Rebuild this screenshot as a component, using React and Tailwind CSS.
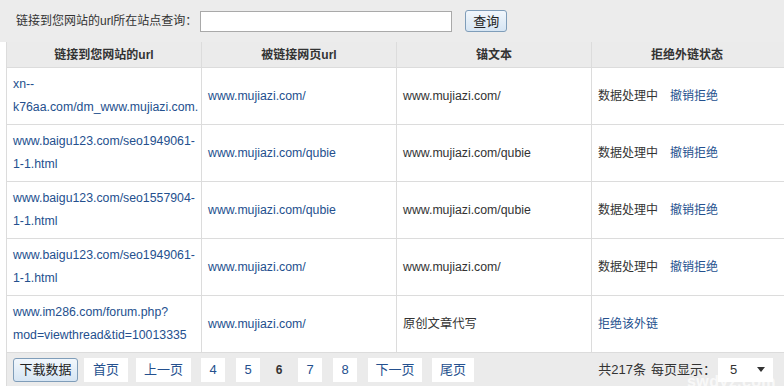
const rows = [
  { src: ['xn--', 'k76aa.com/dm_www.mujiazi.com.'], target: 'www.mujiazi.com/', anchor: 'www.mujiazi.com/', done: false },
  { src: ['www.baigu123.com/seo1949061-', '1-1.html'], target: 'www.mujiazi.com/qubie', anchor: 'www.mujiazi.com/qubie', done: false },
  { src: ['www.baigu123.com/seo1557904-', '1-1.html'], target: 'www.mujiazi.com/qubie', anchor: 'www.mujiazi.com/qubie', done: false },
  { src: ['www.baigu123.com/seo1949061-', '1-1.html'], target: 'www.mujiazi.com/', anchor: 'www.mujiazi.com/', done: false },
  { src: ['www.im286.com/forum.php?', 'mod=viewthread&tid=10013335'], target: 'www.mujiazi.com/', anchor: '原创文章代写', done: true },
];

const pages = [
  { label: '首页', cls: 'ml-[6px] w-[44px]' },
  { label: '上一页', cls: 'ml-[8px] w-[55px]' },
  { label: '4', cls: 'ml-[10px] w-[24px]' },
  { label: '5', cls: 'ml-[11px] w-[24px]' },
  { label: '6', cls: 'ml-[5px] w-[28px]', current: true },
  { label: '7', cls: 'ml-[5px] w-[24px]' },
  { label: '8', cls: 'ml-[11px] w-[24px]' },
  { label: '下一页', cls: 'ml-[11px] w-[54px]' },
  { label: '尾页', cls: 'ml-[10px] w-[42px]' },
];

export default function App() {
  return (
    <div className="w-[784px] h-[391px] overflow-hidden bg-white text-[12px] text-[#333] font-['Liberation_Sans','Noto_Sans_CJK_SC',sans-serif] relative">
      {/* search bar */}
      <div className="h-[42px] bg-[#ececec] flex items-center pl-[16px]">
        <span className="text-[12px] text-[#333]">链接到您网站的url所在站点查询：</span>
        <input className="ml-[3px] w-[252px] h-[21px] bg-white border border-[#a9a9a9] outline-none" />
        <button className="ml-[13px] w-[42px] h-[22px] rounded-[3px] border border-[#7f9db9] bg-gradient-to-b from-[#f2f7fc] to-[#d6e5f3] text-[13px] text-[#222] leading-none">
          查询
        </button>
      </div>

      <div className="ml-[6px] border-l border-[#dcdcdc]">
        {/* header */}
        <div className="grid grid-cols-[195px_195px_195px_1fr] h-[26px] bg-[#ebebeb] border-b border-[#dcdcdc] font-bold text-[#333]">
          <div className="flex items-center justify-center border-r border-[#dcdcdc]">链接到您网站的url</div>
          <div className="flex items-center justify-center border-r border-[#dcdcdc]">被链接网页url</div>
          <div className="flex items-center justify-center border-r border-[#dcdcdc]">锚文本</div>
          <div className="flex items-center justify-center pr-[2px]">拒绝外链状态</div>
        </div>

        {rows.map((r, i) => (
          <div key={i} className="grid grid-cols-[195px_195px_195px_1fr] h-[57px] border-b border-[#dcdcdc]">
            <div className="flex flex-col justify-center px-[6px] border-r border-[#dcdcdc] text-[#24508e] text-[12.3px] leading-[23px] whitespace-nowrap overflow-hidden">
              {r.src.map((s, j) => (
                <span key={j}>{s}</span>
              ))}
            </div>
            <div className="flex items-center px-[6px] border-r border-[#dcdcdc] text-[#24508e] text-[12.3px]">{r.target}</div>
            <div className="flex items-center px-[6px] border-r border-[#dcdcdc] text-[#333] text-[12.3px]">{r.anchor}</div>
            <div className="flex items-center px-[6px]">
              {r.done ? (
                <span className="text-[#24508e]">拒绝该外链</span>
              ) : (
                <>
                  <span className="text-[#333]">数据处理中</span>
                  <span className="ml-[12px] text-[#24508e]">撤销拒绝</span>
                </>
              )}
            </div>
          </div>
        ))}

        {/* footer */}
        <div className="h-[33px] bg-[#ebebeb] flex items-center pl-[6px] pr-[11px]">
          <button className="w-[65px] h-[24px] rounded-[3px] border border-[#7f9db9] bg-gradient-to-b from-[#f2f7fc] to-[#d6e5f3] text-[13px] text-[#222] leading-none">
            下载数据
          </button>
          {pages.map((p, i) =>
            p.current ? (
              <span key={i} className={`${p.cls} h-[24px] flex items-center justify-center font-bold text-[#333]`}>{p.label}</span>
            ) : (
              <span key={i} className={`${p.cls} h-[24px] bg-white flex items-center justify-center text-[#24508e] text-[13px]`}>{p.label}</span>
            )
          )}
          <div className="ml-auto flex items-center text-[13px] text-[#333]">
            <span>共217条</span>
            <span className="ml-[5px]">每页显示：</span>
            <div className="ml-[2px] w-[55px] h-[24px] bg-white flex items-center justify-between pl-[12px] pr-[8px]">
              <span>5</span>
              <svg width="8" height="5" viewBox="0 0 8 5"><path d="M0 0h8L4 5z" fill="#333" /></svg>
            </div>
          </div>
        </div>
      </div>
      {/* watermark */}
      <span className="absolute right-[8px] bottom-[1px] text-[16px] leading-none font-bold text-white/70 tracking-wide">swdyz.com</span>
    </div>
  );
}
